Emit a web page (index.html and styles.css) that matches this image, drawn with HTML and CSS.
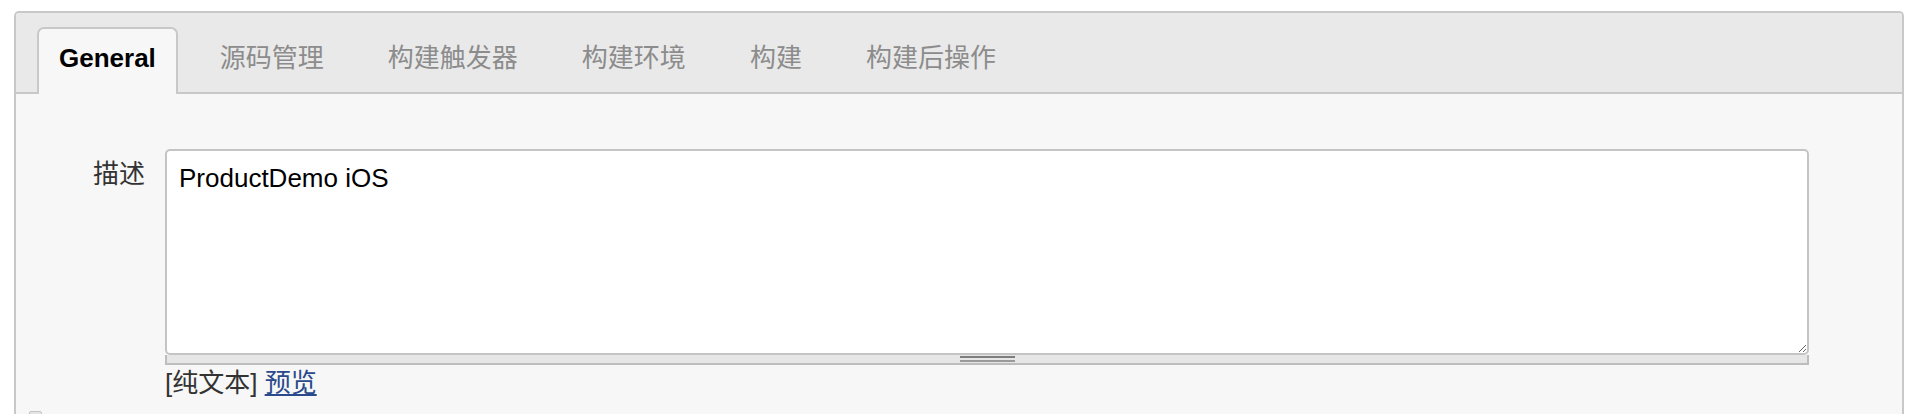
FILE: index.html
```html
<!DOCTYPE html>
<html lang="zh-CN">
<head>
    <meta charset="UTF-8">
    <meta name="viewport" content="width=device-width, initial-scale=1.0">
    <title>ProductDemo iOS - 配置</title>
    <link rel="stylesheet" href="styles.css">
</head>
<body>
    <div class="config-panel">
        <div class="tabbar">
            <div class="tab active">General</div>
            <div class="tab">源码管理</div>
            <div class="tab">构建触发器</div>
            <div class="tab">构建环境</div>
            <div class="tab">构建</div>
            <div class="tab">构建后操作</div>
        </div>

        <div class="config-body">
            <div class="form-row">
                <label class="setting-name" for="description">描述</label>
                <div class="setting-main">
                    <textarea id="description" name="description">ProductDemo iOS</textarea>
                    <div class="textarea-handle"><span class="grip"></span></div>
                    <div class="format-info">[纯文本] <a href="#" class="preview-link">预览</a></div>
                </div>
            </div>
            <div class="form-row next-row">
                <span class="checkbox"></span>
            </div>
        </div>
    </div>
</body>
</html>
```

FILE: styles.css
```css
body {
    margin: 0;
    background-color: #fff;
    font-family: "Liberation Sans", "Noto Sans CJK SC", sans-serif;
    color: #333;
}
.config-panel {
    margin: 11px 18px 0 14px;
    border: 2px solid #c8c8c8;
    border-bottom: none;
    border-radius: 5px 5px 0 0;
    background-color: #f7f7f7;
    height: 420px;
}
.tabbar {
    display: flex;
    gap: 20px;
    padding: 14px 0 0 21px;
    background-color: #e9e9e9;
    border-bottom: 2px solid #c8c8c8;
    border-radius: 3px 3px 0 0;
}
.tab {
    padding: 14px 20px 20px;
    margin-bottom: -2px;
    border: 2px solid transparent;
    border-bottom: none;
    border-radius: 7px 7px 0 0;
    font-size: 26px;
    line-height: 31px;
    color: #8c8c8c;
    white-space: nowrap;
}
.tab.active {
    background-color: #f7f7f7;
    border-color: #c8c8c8;
    color: #000;
    font-weight: bold;
}
.config-body {
    padding: 55px 93px 0 0;
}
.form-row {
    display: grid;
    grid-template-columns: 129px 1fr;
    column-gap: 20px;
}
.setting-name {
    padding-top: 10px;
    text-align: right;
    font-size: 26px;
    line-height: 31px;
    color: #333;
}
textarea {
    display: block;
    width: 100%;
    height: 206px;
    box-sizing: border-box;
    padding: 12px;
    border: 2px solid #c4c4c4;
    border-radius: 5px;
    background-color: #fff;
    font-family: "Liberation Sans", "Noto Sans CJK SC", sans-serif;
    font-size: 26px;
    line-height: 31px;
    color: #000;
    resize: vertical;
    outline: none;
}
.textarea-handle {
    display: flex;
    justify-content: center;
    align-items: center;
    height: 8px;
    background-color: #e6e6e6;
    border: 2px solid #bdbdbd;
    border-top: none;
}
.grip {
    width: 55px;
    height: 2px;
    border-top: 2px solid #7d7d7d;
    border-bottom: 2px solid #9a9a9a;
}
.format-info {
    margin-top: 3px;
    font-size: 26px;
    line-height: 31px;
    color: #333;
}
.preview-link {
    color: #2a4a8c;
    text-decoration: underline;
}
.next-row {
    margin-top: 12px;
    padding-left: 13px;
}
.checkbox {
    display: block;
    width: 11px;
    height: 11px;
    border: 1px solid #c4c4c4;
    border-radius: 2px;
    background-color: #e4e4e4;
}
```
